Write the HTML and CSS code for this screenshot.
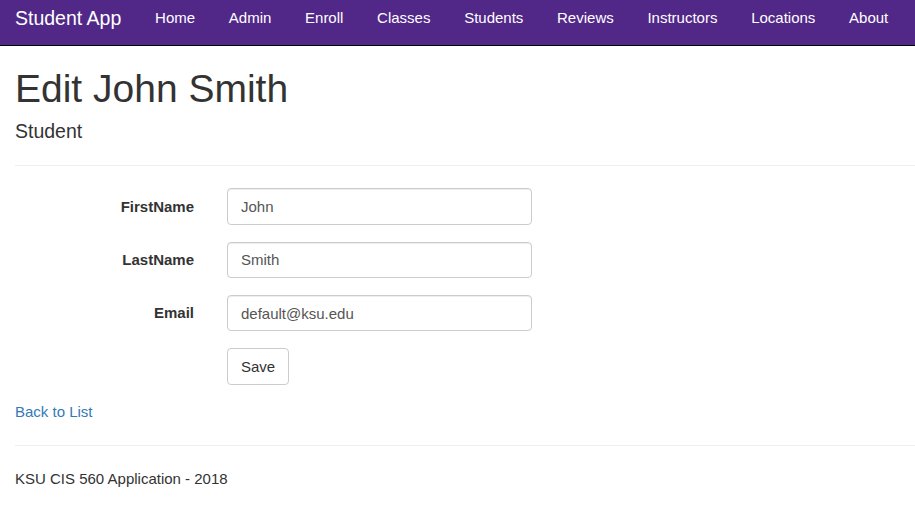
FILE: index.html
```html
<!DOCTYPE html>
<html lang="en">
<head>
<meta charset="utf-8">
<title>Edit John Smith - Student App</title>
<link rel="stylesheet" href="styles.css">
</head>
<body>
<nav class="navbar">
  <a class="brand" href="#">Student App</a>
  <ul class="nav-links">
    <li><a href="#">Home</a></li>
    <li><a href="#">Admin</a></li>
    <li><a href="#">Enroll</a></li>
    <li><a href="#">Classes</a></li>
    <li><a href="#">Students</a></li>
    <li><a href="#">Reviews</a></li>
    <li><a href="#">Instructors</a></li>
    <li><a href="#">Locations</a></li>
    <li><a href="#">About</a></li>
  </ul>
</nav>
<main class="content">
  <h1 class="title">Edit John Smith</h1>
  <h4 class="subtitle">Student</h4>
  <hr class="rule">
  <form class="edit-form">
    <div class="form-row">
      <label class="form-label" for="fn">FirstName</label>
      <input class="form-input" id="fn" type="text" value="John">
    </div>
    <div class="form-row">
      <label class="form-label" for="ln">LastName</label>
      <input class="form-input" id="ln" type="text" value="Smith">
    </div>
    <div class="form-row">
      <label class="form-label" for="em">Email</label>
      <input class="form-input" id="em" type="text" value="default@ksu.edu">
    </div>
    <div class="form-row form-row-last">
      <span class="form-label"></span>
      <button class="btn" type="button">Save</button>
    </div>
  </form>
  <div class="back"><a href="#">Back to List</a></div>
  <hr class="rule footer-rule">
  <footer class="footer">
    <p>KSU CIS 560 Application - 2018</p>
  </footer>
</main>
</body>
</html>
```

FILE: styles.css
```css
* { box-sizing: border-box; }
html, body { margin: 0; padding: 0; }
body {
  font-family: "Liberation Sans", Arial, Helvetica, sans-serif;
  font-size: 15px;
  line-height: 1.42857;
  color: #333;
  background: #fff;
}
a { color: #337ab7; text-decoration: none; }

.navbar {
  display: flex;
  align-items: center;
  height: 46px;
  background: #512888;
  border-bottom: 1px solid #000;
}
.brand {
  color: #fff;
  font-size: 19.5px;
  line-height: 20px;
  padding: 0 17px 9px 15px;
}
.nav-links {
  display: flex;
  list-style: none;
  margin: 0;
  padding: 0;
}
.nav-links a {
  display: block;
  color: #fff;
  font-size: 15px;
  line-height: 20px;
  padding: 0 16.85px 9px;
}

.content { padding: 0 0 0 15px; }

.title {
  font-size: 39px;
  font-weight: 400;
  line-height: 1.1;
  margin: 22px 0 10px;
}
.subtitle {
  font-size: 19.5px;
  font-weight: 400;
  line-height: 1.1;
  margin: 0 0 23px;
}
.rule {
  border: 0;
  border-top: 1px solid #eee;
  margin: 0;
}

.edit-form { padding-top: 22px; }
.form-row {
  display: flex;
  align-items: center;
  gap: 33px;
  margin-bottom: 16.8px;
}
.form-row-last { margin-bottom: 17.5px; }
.form-label {
  width: 179px;
  text-align: right;
  font-weight: 700;
}
.form-input {
  width: 305px;
  height: 36.5px;
  padding: 6px 13px;
  font: inherit;
  color: #555;
  border: 1px solid #ccc;
  border-radius: 4px;
  box-shadow: inset 0 1px 1px rgba(0,0,0,.075);
}
.btn {
  height: 36.5px;
  padding: 6px 13px;
  font: inherit;
  color: #333;
  background: #fff;
  border: 1px solid #ccc;
  border-radius: 4px;
}
.back { margin: 0 0 23px; line-height: 20px; }
.footer-rule { margin-top: 0; }
.footer p { margin: 22px 0 0; }
```
